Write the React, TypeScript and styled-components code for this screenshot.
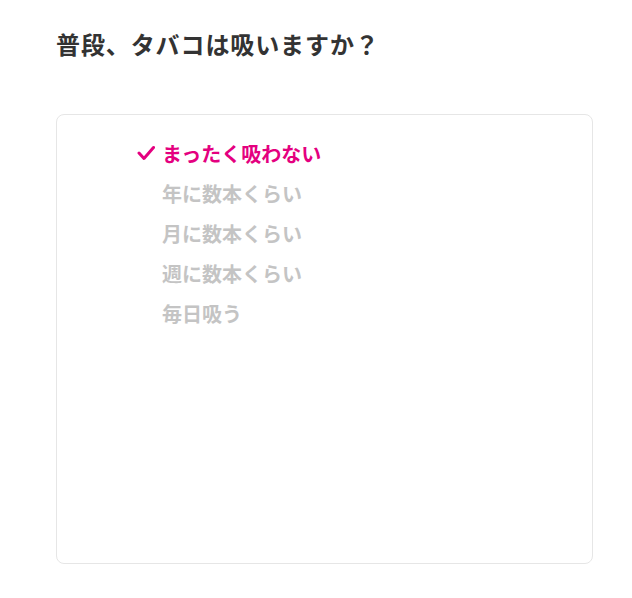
import React from 'react';
import styled, { createGlobalStyle } from 'styled-components';

const GlobalStyle = createGlobalStyle`
	html, body {
		margin: 0;
		padding: 0;
		background: #fff;
	}
	body {
		font-family: "Noto Sans CJK JP", "Noto Sans", sans-serif;
	}
`;

const Page = styled.div`
	display: flex;
	flex-direction: column;
	padding: 26px 40px 0 56px;
`;

const Title = styled.h1`
	margin: 0;
	font-size: 24px;
	line-height: 36px;
	font-weight: 700;
	color: #333;
	letter-spacing: 0.9px;
`;

const Card = styled.div`
	margin-top: 52px;
	width: 537px;
	height: 450px;
	box-sizing: border-box;
	border: 1px solid #e6e6e6;
	border-radius: 8px;
	padding: 18px 0 0 80px;
`;

const Options = styled.ul`
	list-style: none;
	margin: 0;
	padding: 0;
`;

const Option = styled.li<{ $selected?: boolean }>`
	display: flex;
	align-items: center;
	height: 40px;
	font-size: 20px;
	font-weight: 700;
	color: ${p => (p.$selected ? '#e4007f' : '#c4c4c4')};
	cursor: pointer;
`;

const CheckSlot = styled.span`
	display: inline-flex;
	align-items: center;
	width: 25px;
	flex-shrink: 0;
`;

const Check = () => (
	<svg width="18" height="16" viewBox="0 0 18 16">
		<polyline points="2,8 7,13.5 16.5,2.5" fill="none" stroke="#e4007f" strokeWidth="3" strokeLinecap="round" strokeLinejoin="round" />
	</svg>
);

const choices = ['まったく吸わない', '年に数本くらい', '月に数本くらい', '週に数本くらい', '毎日吸う'];

export default function App() {
	const selected = 0;
	return (
		<>
			<GlobalStyle />
			<Page>
				<Title>普段、タバコは吸いますか？</Title>
				<Card>
					<Options>
						{choices.map((c, i) => (
							<Option key={c} $selected={i === selected}>
								<CheckSlot>{i === selected && <Check />}</CheckSlot>
								{c}
							</Option>
						))}
					</Options>
				</Card>
			</Page>
		</>
	);
}
